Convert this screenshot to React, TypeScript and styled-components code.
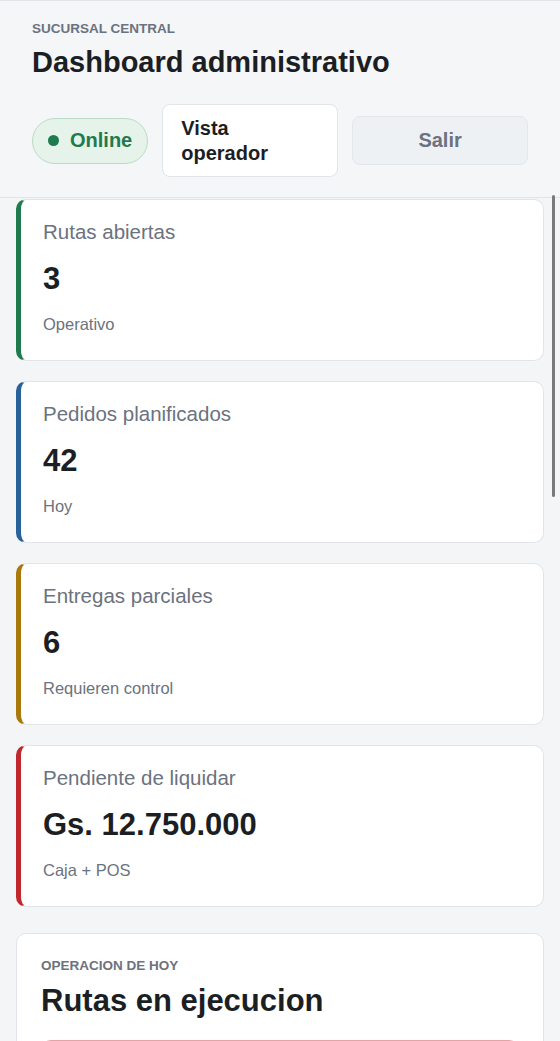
import styled, { createGlobalStyle } from 'styled-components';

const BG = '#f3f5f7';
const LINE = '#e1e5e9';
const TEXT_DARK = '#1b1f24';
const TEXT_MUTED = '#6b7280';

const GlobalStyle = createGlobalStyle`
  * { box-sizing: border-box; }
  html, body {
    margin: 0;
    padding: 0;
    background: ${BG};
    font-family: "Liberation Sans", Arial, sans-serif;
    color: ${TEXT_DARK};
  }
`;

const Screen = styled.div`
  position: relative;
  width: 560px;
  height: 1041px;
  overflow: hidden;
  background: ${BG};
  display: flex;
  flex-direction: column;
`;

const Header = styled.header`
  padding: 20px 32px 20px 32px;
  border-top: 1px solid ${LINE};
  border-bottom: 1px solid ${LINE};
  background: #f4f6f8;
`;

const Eyebrow = styled.p`
  margin: 0;
  font-size: 13.5px;
  font-weight: 700;
  text-transform: uppercase;
  color: ${TEXT_MUTED};
  line-height: 16px;
`;

const Title = styled.h1<{ $size?: number; $gap?: number }>`
  margin: ${(p) => p.$gap ?? 7}px 0 0 0;
  font-size: ${(p) => p.$size ?? 29}px;
  line-height: 36px;
  font-weight: 700;
  color: ${TEXT_DARK};
`;

const ActionRow = styled.div`
  margin-top: 24px;
  display: flex;
  align-items: center;
  gap: 14px;
`;

const StatusPill = styled.div`
  display: flex;
  align-items: center;
  gap: 11px;
  height: 46px;
  padding: 0 15px 0 15px;
  border-radius: 23px;
  background: #e5f3ea;
  border: 1px solid #b9dcc6;
  color: #1f7a4d;
  font-size: 20px;
  font-weight: 700;
`;

const Dot = styled.span`
  width: 11px;
  height: 11px;
  border-radius: 50%;
  background: #1f7a4d;
`;

const ActionButton = styled.button<{ $variant: 'light' | 'muted' }>`
  flex: 1 1 0;
  min-width: 0;
  padding: 0 18px;
  font-family: inherit;
  font-size: 20px;
  font-weight: 700;
  line-height: 25px;
  border-radius: 8px;
  cursor: pointer;
  ${(p) =>
    p.$variant === 'light'
      ? `
    height: 73px;
    text-align: left;
    background: #ffffff;
    border: 1px solid ${LINE};
    color: ${TEXT_DARK};
  `
      : `
    height: 49px;
    text-align: center;
    background: #eef1f4;
    border: 1px solid #e3e7eb;
    color: ${TEXT_MUTED};
  `}
`;

const Content = styled.main`
  padding: 1px 16px 0 16px;
  display: flex;
  flex-direction: column;
`;

const StatList = styled.div`
  display: flex;
  flex-direction: column;
  gap: 20px;
`;

const StatCard = styled.div<{ $accent: string }>`
  height: 162px;
  background: #ffffff;
  border: 1px solid ${LINE};
  border-left: 5px solid ${(p) => p.$accent};
  border-radius: 10px;
  padding: 20px 22px;
  display: flex;
  flex-direction: column;
`;

const StatLabel = styled.div`
  font-size: 20.5px;
  line-height: 24px;
  color: ${TEXT_MUTED};
`;

const StatValue = styled.div`
  margin-top: 18px;
  font-size: 31px;
  line-height: 34px;
  font-weight: 700;
  color: ${TEXT_DARK};
`;

const StatNote = styled.div`
  margin-top: 18px;
  font-size: 16.5px;
  line-height: 20px;
  color: ${TEXT_MUTED};
`;

const Section = styled.section`
  margin-top: 26px;
  background: #ffffff;
  border: 1px solid ${LINE};
  border-radius: 10px;
  padding: 24px 24px 0 24px;
  height: 200px;
`;

const RouteItem = styled.div`
  margin-top: 21px;
  height: 80px;
  border: 1px solid #e6a3a3;
  border-radius: 10px;
  background: #fff7f7;
`;

const ScrollThumb = styled.div`
  position: absolute;
  top: 195px;
  right: 5px;
  width: 3px;
  height: 302px;
  border-radius: 2px;
  background: #7a7a7a;
`;

const stats = [
  { label: 'Rutas abiertas', value: '3', note: 'Operativo', accent: '#1f7a4d' },
  { label: 'Pedidos planificados', value: '42', note: 'Hoy', accent: '#27629a' },
  { label: 'Entregas parciales', value: '6', note: 'Requieren control', accent: '#a97a0b' },
  { label: 'Pendiente de liquidar', value: 'Gs. 12.750.000', note: 'Caja + POS', accent: '#c0282d' },
];

export default function App() {
  return (
    <>
      <GlobalStyle />
      <Screen>
        <Header>
          <Eyebrow>Sucursal central</Eyebrow>
          <Title>Dashboard administrativo</Title>
          <ActionRow>
            <StatusPill>
              <Dot />
              Online
            </StatusPill>
            <ActionButton $variant="light">
              Vista
              <br />
              operador
            </ActionButton>
            <ActionButton $variant="muted">Salir</ActionButton>
          </ActionRow>
        </Header>
        <Content>
          <StatList>
            {stats.map((s) => (
              <StatCard key={s.label} $accent={s.accent}>
                <StatLabel>{s.label}</StatLabel>
                <StatValue>{s.value}</StatValue>
                <StatNote>{s.note}</StatNote>
              </StatCard>
            ))}
          </StatList>
          <Section>
            <Eyebrow>Operacion de hoy</Eyebrow>
            <Title as="h2" $size={31} $gap={9}>
              Rutas en ejecucion
            </Title>
            <RouteItem />
          </Section>
        </Content>
        <ScrollThumb />
      </Screen>
    </>
  );
}
